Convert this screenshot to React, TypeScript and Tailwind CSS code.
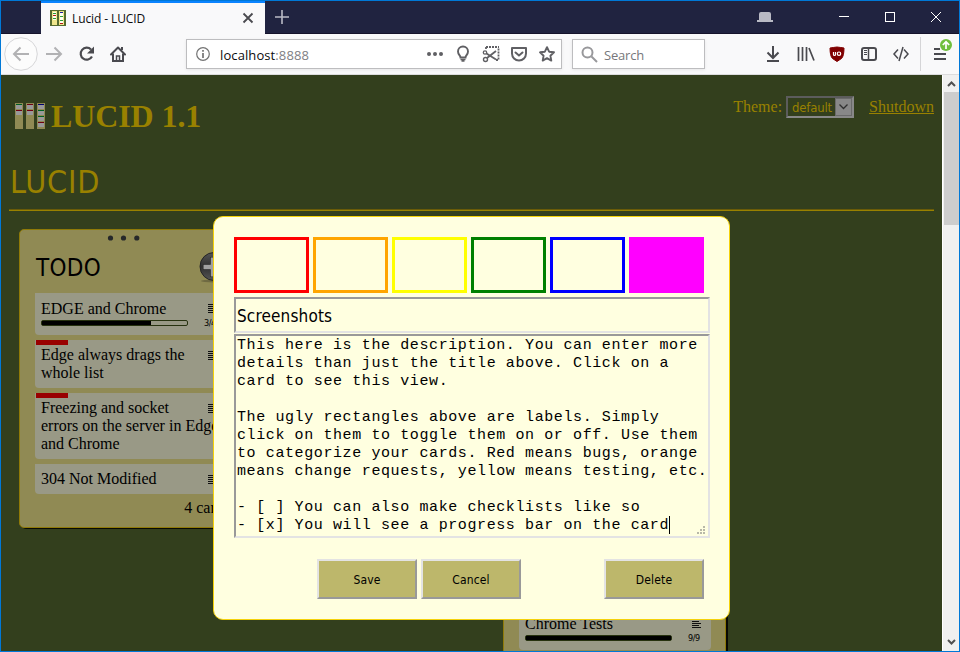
import React from "react";

const tahoma = "font-['DejaVu_Sans_Condensed','DejaVu_Sans',sans-serif] [font-stretch:condensed]";
const segoe = "font-['Open_Sans','Noto_Sans',sans-serif]";
const times = "font-['Liberation_Serif',serif]";
const courier = "font-['Liberation_Mono',monospace]";

function Favicon() {
  return (
    <svg width="16" height="16" viewBox="0 0 16 16" shapeRendering="crispEdges">
      <rect width="16" height="16" fill="#556b2f" />
      <path d="M2 1h5v14H2zM9 1h5v14H9z" fill="#f0e68c" />
      <path d="M3 2h3v8H3zM10 2h3v12h-3z" fill="#fffff0" />
      <path d="M3 3.500h3M3 8.500h3M10 6.500h3M10 10.500h3" stroke="#2a9b35" />
      <path d="M3 5.500h3M10 13.500h3" stroke="#b01818" />
      <path d="M10 2.500h3" stroke="#1c1c9c" />
    </svg>
  );
}

function TitleBar() {
  return (
    <div className="flex h-[33px] shrink-0 border-b border-[#15132b] bg-[#202340]">
      <div className="ml-[40px] flex h-[33px] w-[224px] items-center border-t-2 border-[#0a84ff] bg-[#f9f9fa] pl-[9px]">
        <div className="-mt-[2px]"><Favicon /></div>
        <span className={`${segoe} ml-[6px] w-[150px] text-[12px] leading-4 tracking-[-0.1px] text-[#0c0c0d]`}>Lucid - LUCID</span>
        <svg className="-mt-[2px] ml-[20px]" width="12" height="12" viewBox="0 0 12 12" stroke="#4a4a4f" strokeWidth="1.8">
          <path d="M1.500 1.500l9 9M10.500 1.500l-9 9" />
        </svg>
      </div>
      <svg className="ml-[10px] mt-[9px]" width="14" height="14" viewBox="0 0 14 14" stroke="#b9bac5" strokeWidth="1.6">
        <path d="M7 0v14M0 7h14" />
      </svg>
      <svg className="ml-[468px] mt-[10px]" width="16" height="12" viewBox="0 0 16 12" fill="#b9bac5">
        <path d="M2 9V3q0-2 2-2h8q2 0 2 2v6h2v2H0V9z" />
      </svg>
      <svg className="ml-[66px] mt-[10px]" width="104" height="12" viewBox="0 0 104 12" fill="none" stroke="#fff" shapeRendering="crispEdges">
        <path d="M0 5.500h10" />
        <rect x="46.500" y="1.500" width="9" height="9" />
        <path d="M92 1l10 10M102 1L92 11" shapeRendering="auto" />
      </svg>
    </div>
  );
}

function ToolBar() {
  return (
    <div className="flex h-[41px] shrink-0 items-center border-b border-[#dcdcdd] bg-[#f9f9fa]">
      <svg className="ml-[3px] shrink-0" width="130" height="36" viewBox="0 0 130 36" fill="none">
        <circle cx="17" cy="18" r="16.300" fill="#fcfcfc" stroke="#d6d6d8" />
        <path d="M25 18H10M16.500 11.500L10 18l6.500 6.500" stroke="#b2b2b4" strokeWidth="2" />
        <path d="M42 18h15M50.500 11.500L57 18l-6.500 6.500" stroke="#b2b2b4" strokeWidth="2" />
        <path d="M87 13.500A6 6 0 1 0 88 20.500" stroke="#4a4a4f" strokeWidth="2.200" />
        <path d="M90 10.500v7h-7z" fill="#4a4a4f" />
        <path d="M107 18.500l7-7 7 7" stroke="#4a4a4f" strokeWidth="2" strokeLinejoin="round" strokeLinecap="round" />
        <path d="M109 17.500v7.500h10v-7.500M118 11v3" stroke="#4a4a4f" strokeWidth="2" />
        <path d="M112.500 25v-5h3v5" stroke="#4a4a4f" strokeWidth="1.500" />
      </svg>
      <div className="ml-[52px] flex h-[30px] w-[376px] shrink-0 items-center border border-[#bdbdbf] bg-white shadow-[0_1px_3px_rgba(0,0,0,0.08)]">
        <svg className="ml-[9px] shrink-0" width="14" height="14" viewBox="0 0 14 14" fill="none" stroke="#737373">
          <circle cx="7" cy="7" r="6.300" strokeWidth="1.200" />
          <path d="M7 6v5M7 3v1.800" strokeWidth="1.700" />
        </svg>
        <div className={`${segoe} ml-[10px] mt-[2px] w-[200px] text-[13px] leading-5 tracking-[0.1px] text-[#0c0c0d]`}>
          localhost<span className="text-[#808084]">:8888</span>
        </div>
        <svg className="ml-[4px] shrink-0" width="132" height="18" viewBox="0 0 132 18" fill="none" stroke="#606064">
          <path d="M5 9h.01M11 9h.01M17 9h.01" strokeWidth="4" strokeLinecap="round" />
          <path d="M36.500 12.500C36.500 10.500 34 9.500 34 6.500a5 5 0 0 1 10 0c0 3-2.500 4-2.500 6z" strokeWidth="1.900" />
          <path d="M36.500 14.500h5M37.500 16h3" strokeWidth="1.700" />
          <path d="M62 2h13M74.500 3.500v11.500H71M62 2v3" strokeWidth="1.800" strokeDasharray="2 1" />
          <circle cx="61" cy="7.500" r="1.700" strokeWidth="1.300" /><circle cx="61.500" cy="14.500" r="2" strokeWidth="1.400" />
          <path d="M63 13L72 6M62.500 8.500L72 14.500" strokeWidth="1.800" />
          <path d="M88 3h14v5.500a7 7 0 0 1-14 0z" strokeWidth="2" strokeLinejoin="round" />
          <path d="M91.500 7.500L95 10.500l3.500-3" strokeWidth="2" strokeLinecap="round" />
          <path d="M123 2.200l2.100 4.500 4.900.6-3.600 3.400.9 4.900-4.300-2.400-4.300 2.400.9-4.900-3.600-3.400 4.900-.6z" strokeWidth="1.900" strokeLinejoin="round" />
        </svg>
      </div>
      <div className="ml-[10px] flex h-[30px] w-[133px] shrink-0 items-center border border-[#bdbdbf] bg-white shadow-[0_1px_3px_rgba(0,0,0,0.08)]">
        <svg className="ml-[8px]" width="17" height="17" viewBox="0 0 17 17" fill="none" stroke="#98989b" strokeWidth="2">
          <circle cx="6.500" cy="6.500" r="5" /><path d="M10.500 10.500l5.500 5.500" />
        </svg>
        <span className={`${segoe} ml-[6px] mt-[2px] text-[13px] leading-5 tracking-[-0.2px] text-[#77777b]`}>Search</span>
      </div>
      <svg className="ml-[59px] shrink-0" width="190" height="40" viewBox="0 0 190 40" fill="none" stroke="#4a4a4f" strokeWidth="2">
        <path d="M9 12v12M3.500 18.500L9 24l5.500-5.500M3 27h12" />
        <path d="M34.500 13v14M38.500 13v14M42.500 13v14M45 14l5 12.500" strokeWidth="1.700" />
        <path d="M73 13q4 .5 7 1 0 8-2.500 10.500L73 27.500l-4.500-3Q66 22 66 14q3-.5 7-1z" fill="#800000" stroke="#800000" strokeWidth="1" />
        <path d="M69.500 18v2.500q0 1 1 1t1-1V18" stroke="#fff" strokeWidth="1.200" />
        <circle cx="75" cy="19.700" r="1.700" stroke="#fff" strokeWidth="1.200" />
        <rect x="98" y="14" width="14" height="12" rx="2" />
        <path d="M104.500 14v12" strokeWidth="1.500" /><path d="M100 16.500h3M100 18.500h3M100 20.500h3" strokeWidth="1" />
        <path d="M134 15.500l-4 4.500 4 4.500M140 15.500l4 4.500-4 4.500M139 13l-4 14" strokeWidth="1.500" />
        <path d="M156.500 3v34" stroke="#d5d5d7" strokeWidth="1" />
        <path d="M170 15h6M170 20h12M170 25h12" />
        <circle cx="182" cy="11" r="6" fill="#70bf3d" stroke="none" />
        <path d="M182 15V8.500M178.800 11L182 7.800l3.200 3.200" stroke="#fff" strokeWidth="1.700" />
      </svg>
    </div>
  );
}

function Logo() {
  return (
    <svg className="mt-[1px]" width="30" height="26" viewBox="0 0 30 26" shapeRendering="crispEdges">
      <path d="M0 0h8v26H0zM11 0h8v26h-8zM22 0h8v26h-8z" fill="#908a54" />
      <path d="M1 1h6v5H1zM1 7h6v5H1zM12 1h6v5h-6zM12 7h6v5h-6zM23 1h6v5h-6zM23 7h6v5h-6zM23 13h6v5h-6zM23 19h6v5h-6z" fill="#999" />
      <path d="M1 1.500h6M23 7.500h6M23 13.500h6" stroke="#006020" />
      <path d="M1 7.500h6M12 1.500h6M12 7.500h6M23 19.500h6" stroke="#700010" />
      <path d="M23 1.500h6" stroke="#000070" />
    </svg>
  );
}

function Plus() {
  return (
    <svg width="30" height="31" viewBox="0 0 30 31">
      <defs>
        <linearGradient id="disc" x1="0" y1="0" x2="0" y2="1">
          <stop offset="0" stopColor="#555" /><stop offset="0.5" stopColor="#303030" /><stop offset="1" stopColor="#555" />
        </linearGradient>
      </defs>
      <ellipse cx="15" cy="29" rx="13" ry="1.500" fill="#6f6a42" />
      <circle cx="15" cy="14.500" r="14" fill="url(#disc)" stroke="#252525" />
      <path d="M14 5v20M4 15h20" stroke="#252525" strokeWidth="6" />
      <path d="M14 5.500v19M4.500 15h19" stroke="#a0a0a0" strokeWidth="4.500" />
    </svg>
  );
}

type CardProps = { title: string; bug?: boolean; progress?: string; done?: number };

function Card({ title, bug, progress, done = 0 }: CardProps) {
  return (
    <div className={`relative mb-[5px] w-[192px] rounded-b-[4px] bg-[#999986] px-[6px] pb-[6px] ${progress ? "pt-[7px]" : "pt-[6px]"}`}>
      {bug && <div className="absolute left-[1px] top-0 h-[5px] w-8 bg-[#990000]" />}
      <div className="flex">
        <div className={`${times} w-[167px] whitespace-pre text-[16px] leading-[18px] text-black`}>{title}</div>
        <svg className={`shrink-0 ${progress ? "mt-[4px]" : "mt-[5px]"}`} width="10" height="10" viewBox="0 0 10 10" stroke="#111" shapeRendering="crispEdges">
          <path d="M0 .5h9M0 2.500h7M0 4.500h9M0 6.500h7M0 8.500h9" />
        </svg>
      </div>
      {progress && (
        <div className="flex h-[11px] items-start">
          <div className="mt-[2px] h-[6px] w-[147px] rounded-[2px] border border-[#27320f]">
            <div className="h-full bg-black" style={{ width: `${done}%` }} />
          </div>
          <span className={`${tahoma} ml-[16px] text-[9px] leading-[11px] tracking-[-0.4px]`}>{progress}</span>
        </div>
      )}
    </div>
  );
}

type ColumnProps = { title: string; cards: CardProps[]; className: string; count?: boolean };

function Column({ title, cards, className, count }: ColumnProps) {
  return (
    <section className={`flex w-[223px] shrink-0 flex-col rounded-[5px] border border-[#8f7a08] bg-[#908a54] pl-[15px] shadow-[2px_1px_0_#080a04] ${className}`}>
      <svg className="ml-[72px] mt-[5px] shrink-0" width="34" height="6" viewBox="0 0 34 6" fill="#26282a">
        <circle cx="3.500" cy="3" r="2.600" /><circle cx="16.500" cy="3" r="2.600" /><circle cx="29.800" cy="3" r="2.600" />
      </svg>
      <div className="mb-[10px] mt-[11px] flex h-[31px] w-[194px] shrink-0 justify-between">
        <h3 className={`${tahoma} ml-px mt-px text-[24px] leading-[31px] tracking-[0.3px]`}>{title}</h3>
        <Plus />
      </div>
      {cards.map((c) => <Card key={c.title} {...c} />)}
      {count && <div className={`${times} w-[195px] text-right text-[16px] leading-[18px]`}>{cards.length} cards</div>}
    </section>
  );
}

const todo: CardProps[] = [
  { title: "EDGE and Chrome", progress: "3/4", done: 75 },
  { title: "Edge always drags the\nwhole list", bug: true },
  { title: "Freezing and socket\nerrors on the server in Edge\nand Chrome", bug: true },
  { title: "304 Not Modified" },
];
const tests: CardProps[] = [{ title: "Chrome Tests", progress: "9/9", done: 100 }];

function Board() {
  return (
    <main className="min-w-0 flex-1 overflow-hidden bg-[#333f1d] text-black">
      <header className="flex h-[76px] pl-[14px] pr-[8px] text-[#998100]">
        <div className="mt-[27px]"><Logo /></div>
        <h1 className={`${times} ml-[6px] mt-[23px] text-[32px] font-bold leading-[37px] tracking-[-0.1px]`}>LUCID 1.1</h1>
        <div className={`${times} ml-auto mt-[21px] flex h-[22px] text-[16px] leading-[22px]`}>
          <span>Theme:</span>
          <div className="ml-[4px] flex h-[22px] w-[68px] border-2 border-b-[#888] border-l-[#5c5c5c] border-r-[#888] border-t-[#5c5c5c]">
            <span className={`${tahoma} w-[47px] pl-[4px] text-[13px] leading-[19px] tracking-[-0.2px]`}>default</span>
            <div className="flex w-[17px] items-center justify-center border border-[#6a6a6a] bg-[#888]">
              <svg width="9" height="6" viewBox="0 0 9 6" fill="none" stroke="#303030" strokeWidth="1.300"><path d="M.5.5l4 4 4-4" /></svg>
            </div>
          </div>
          <span className="ml-[15px] h-[18px] border-b border-[#998100] leading-[21px]">Shutdown</span>
        </div>
      </header>
      <h2 className={`${tahoma} ml-[9px] mt-[10px] h-[48px] pt-px text-[32px] leading-[40px] tracking-[0.8px] text-[#998100]`}>LUCID</h2>
      <div className="ml-[8px] mr-[8px] h-[2px] border-b border-t border-b-[#998100] border-t-[#6a5b08]" />
      <div className="ml-[18px] mt-[18px] flex items-start gap-[19px]">
        <Column title="TODO" cards={todo} className="h-[299px]" count />
        <Column title="Doing" cards={[]} className="h-[240px]" />
        <Column title="Done" cards={tests} className="mt-[315px] h-[150px]" />
      </div>
    </main>
  );
}

function ScrollBar() {
  return (
    <div className="flex w-[17px] shrink-0 flex-col items-center border-l border-white bg-[#f0f0f0]">
      <svg className="mt-[5px]" width="9" height="7" viewBox="0 0 9 7" fill="none" stroke="#505050" strokeWidth="2"><path d="M1 6l3.500-3.500L8 6" /></svg>
      <div className="mt-[5px] h-[133px] w-[15px] bg-[#cdcdcd]" />
      <svg className="mb-[5px] mt-auto" width="9" height="7" viewBox="0 0 9 7" fill="none" stroke="#505050" strokeWidth="2"><path d="M1 1l3.500 3.500L8 1" /></svg>
    </div>
  );
}

const description = `This here is the description. You can enter more
details than just the title above. Click on a
card to see this view.

The ugly rectangles above are labels. Simply
click on them to toggle them on or off. Use them
to categorize your cards. Red means bugs, orange
means change requests, yellow means testing, etc.

- [ ] You can also make checklists like so
- [x] You will see a progress bar on the card`;

const labels = [
  "border-[#ff0000]",
  "border-[#ffa500]",
  "border-[#ffff00]",
  "border-[#008000]",
  "border-[#0000ff]",
  "border-[#ff00ff] bg-[#ff00ff]",
];

const inset = "border-2 border-b-[#e3e3e3] border-l-[#999] border-r-[#e3e3e3] border-t-[#999]";

function Button({ children, className = "" }: { children: string; className?: string }) {
  return (
    <button className={`${tahoma} h-[40px] w-[100px] border-2 border-b-[#999] border-l-[#e3e3e3] border-r-[#999] border-t-[#e3e3e3] bg-[#bdb76b] pt-[2px] text-[12px] leading-4 tracking-[0.15px] text-black ${className}`}>
      {children}
    </button>
  );
}

function CardDialog() {
  return (
    <div className="absolute left-[212px] top-[215px] flex h-[404px] w-[517px] flex-col rounded-[10px] border border-[#f5d20a] bg-[#ffffe0] pl-[20px] pt-[20px]">
      <div className="flex gap-[4px]">
        {labels.map((c) => <div key={c} className={`h-[56px] w-[75px] border-[3px] ${c}`} />)}
      </div>
      <div className={`${inset} ${tahoma} mt-[4px] h-[36px] w-[476px] pl-[1px] text-[17px] leading-[34px] tracking-[0.15px] text-black`}>Screenshots</div>
      <div className={`${inset} relative mt-[1px] h-[204px] w-[476px] pl-px pt-px text-black`}>
        <p className={`${courier} whitespace-pre text-[15px] leading-[18px] tracking-[0.6px]`}>{description}</p>
        <span className="absolute left-[433px] top-[180px] h-[18px] w-px bg-black" />
        <svg className="absolute bottom-[2px] right-[3px]" width="8" height="8" viewBox="0 0 8 8" fill="#b8b8a8" shapeRendering="crispEdges">
          <path d="M6 0h2v2H6zM3 3h2v2H3zM6 3h2v2H6zM0 6h2v2H0zM3 6h2v2H3zM6 6h2v2H6z" />
        </svg>
      </div>
      <div className="ml-[83px] mt-[21px] flex gap-[4px]">
        <Button>Save</Button>
        <Button>Cancel</Button>
        <Button className="ml-[79px]">Delete</Button>
      </div>
    </div>
  );
}

export default function App() {
  return (
    <div className="relative flex h-[652px] w-[960px] flex-col overflow-hidden border border-[#0078d7]">
      <TitleBar />
      <ToolBar />
      <div className="flex min-h-0 flex-1">
        <Board />
        <ScrollBar />
      </div>
      <CardDialog />
    </div>
  );
}
